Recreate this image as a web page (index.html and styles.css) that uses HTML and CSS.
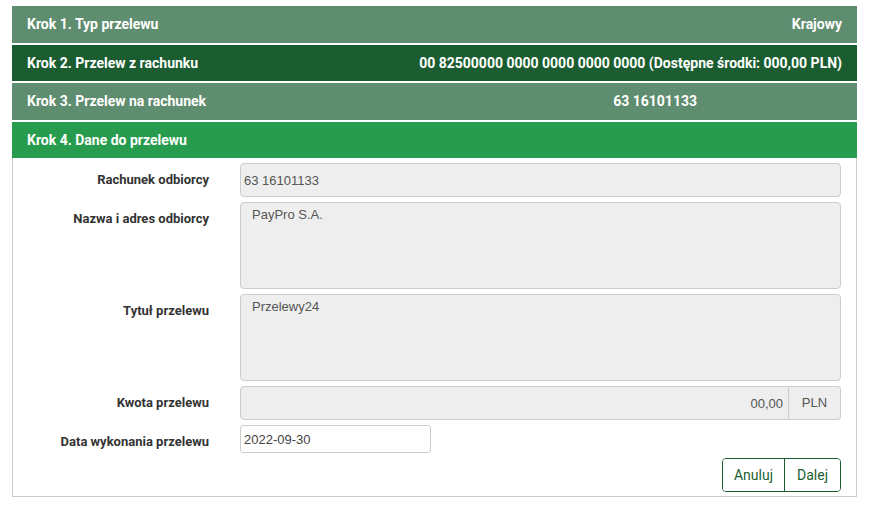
FILE: index.html
```html
<!DOCTYPE html>
<html lang="pl">
  <head>
    <meta charset="utf-8">
    <title>Przelew</title>
    <link rel="stylesheet" href="styles.css">
  </head>
  <body>
    <div class="transfer">
      <div class="step step-muted">
        <span>Krok 1. Typ przelewu</span>
        <span>Krajowy</span>
      </div>
      <div class="step step-dark">
        <span>Krok 2. Przelew z rachunku</span>
        <span>00 82500000 0000 0000 0000 0000 (Dostępne środki: 000,00 PLN)</span>
      </div>
      <div class="step step-muted">
        <span>Krok 3. Przelew na rachunek</span>
        <span class="step-account">63 16101133</span>
      </div>
      <div class="step step-active">
        <span>Krok 4. Dane do przelewu</span>
      </div>

      <div class="panel">
        <label class="field-label">Rachunek odbiorcy</label>
        <input class="field" type="text" value="63 16101133" readonly>

        <label class="field-label">Nazwa i adres odbiorcy</label>
        <textarea class="field field-area" readonly>PayPro S.A.</textarea>

        <label class="field-label">Tytuł przelewu</label>
        <textarea class="field field-area" readonly>Przelewy24</textarea>

        <label class="field-label">Kwota przelewu</label>
        <div class="amount">
          <input class="field amount-input" type="text" value="00,00" readonly>
          <span class="amount-addon">PLN</span>
        </div>

        <label class="field-label">Data wykonania przelewu</label>
        <div>
          <input class="date-input" type="text" value="2022-09-30">
        </div>

        <div class="actions">
          <div class="btn-group">
            <button class="btn">Anuluj</button>
            <button class="btn">Dalej</button>
          </div>
        </div>
      </div>
    </div>
  </body>
</html>
```

FILE: styles.css
```css
body {
  margin: 0;
  background: #fff;
  font-family: Roboto, "Liberation Sans", sans-serif;
}
.transfer {
  width: 845px;
  margin: 6px 0 0 12px;
}

/* -- step headers -- */
.step {
  display: flex;
  justify-content: space-between;
  align-items: center;
  padding: 10px 15px;
  line-height: 17px;
  margin-bottom: 2px;
  color: #fff;
  font-size: 14px;
  font-weight: 700;
}
.step-muted {
  background-color: #5f8d6f;
}
.step-dark {
  background-color: #1b5d31;
  line-height: 16px;
}
.step-active {
  background-color: #279c4e;
  line-height: 16px;
  margin-bottom: 0;
}
.step-account {
  margin-right: 145px;
}

/* -- form -- */
.panel {
  display: grid;
  grid-template-columns: 196px 1fr;
  column-gap: 31px;
  row-gap: 5px;
  padding: 5px 15px 4px 0;
  border: 1px solid #ccc;
  border-top: none;
}
.field-label {
  text-align: right;
  font-size: 13px;
  font-weight: 700;
  color: #333;
  padding-top: 8px;
  line-height: 17px;
}
.field {
  box-sizing: border-box;
  width: 100%;
  height: 34px;
  margin: 0;
  padding: 6px 3px;
  border: 1px solid #ccc;
  border-radius: 4px;
  background-color: #eee;
  color: #555;
  font-family: "Liberation Sans", Arial, sans-serif;
  font-size: 13px;
  outline: none;
}
.field-area {
  height: 87px;
  padding: 3px 11px;
  line-height: 17px;
  resize: none;
  overflow: hidden;
}
.amount {
  display: flex;
}
.amount-input {
  flex: 1;
  text-align: right;
  padding-right: 5px;
  border-radius: 4px 0 0 4px;
}
.amount-addon {
  box-sizing: border-box;
  width: 52px;
  height: 34px;
  line-height: 32px;
  text-align: center;
  border: 1px solid #ccc;
  border-left: none;
  border-radius: 0 4px 4px 0;
  background-color: #eee;
  color: #555;
  font-family: "Liberation Sans", Arial, sans-serif;
  font-size: 13px;
}
.date-input {
  box-sizing: border-box;
  width: 191px;
  height: 28px;
  margin: 0;
  padding: 4px 3px;
  border: 1px solid #ccc;
  border-radius: 3px;
  background: #fff;
  color: #444;
  font-family: "Liberation Sans", Arial, sans-serif;
  font-size: 13px;
}
.actions {
  grid-column: 2;
  display: flex;
  justify-content: flex-end;
}
.btn-group {
  display: flex;
  border: 1px solid #1b5d31;
  border-radius: 4px;
  overflow: hidden;
}
.btn {
  height: 32px;
  margin: 0;
  padding: 0 11px;
  border: none;
  background: #fff;
  color: #1b5d31;
  font-family: Roboto, "Liberation Sans", sans-serif;
  font-size: 14px;
  cursor: pointer;
}
.btn + .btn {
  border-left: 1px solid #1b5d31;
  padding: 0 12px;
}
```
